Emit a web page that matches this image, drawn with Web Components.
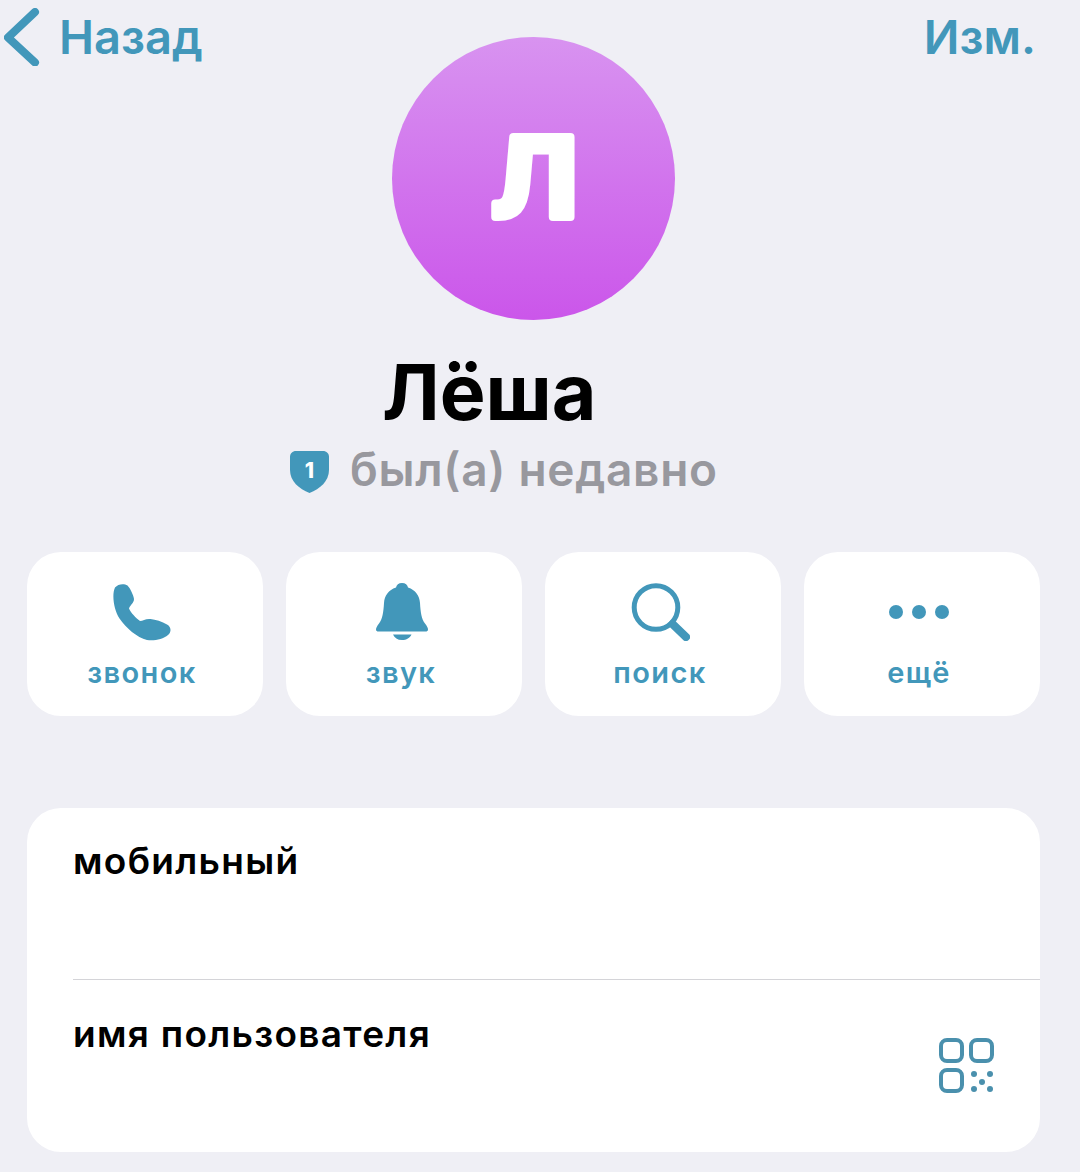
<!DOCTYPE html>
<html lang="ru">
<head>
<meta charset="utf-8">
<title>Профиль</title>
<style>
  html, body { margin: 0; background: #efeff5; }
  body { font-family: Inter, "Liberation Sans", sans-serif; }
</style>
</head>
<body>
<profile-page>
  <profile-nav slot="nav" back="Назад" edit="Изм."></profile-nav>
  <profile-avatar slot="avatar" letter="Л"></profile-avatar>
  <profile-title slot="title" name="Лёша" status="был(а) недавно" badge="1"></profile-title>
  <action-button slot="actions" label="звонок">
    <svg width="60" height="58" viewBox="0 0 60 58"><path fill="currentColor" d="M3 4.5C6 .8 12 .2 15.500 2.500C18 5 21.500 12 22 16C22 20 18.500 21.500 17 25.500C19 30 24 35 28 38C31 38 33.500 35.500 38.500 36C43.500 36.500 50 38.500 55 41.500C59.500 44 59.500 49 56 52C51 56.500 42 58 35 57C25 54.500 14 45 7.500 35.500C2 27 -.5 12 3 4.500Z"/></svg>
  </action-button>
  <action-button slot="actions" label="звук">
    <svg style="margin-left:2px" width="52" height="58" viewBox="0 0 52 58"><path fill="currentColor" d="M26 0C29.500 0 31.500 2 32 4.500C39.500 7 43.500 12.500 44 20C44.500 29 45.500 36 49 40.500C51 43 52 45 52 46.500C52 48 51 48.500 49.500 48.500H2.500C1 48.500 0 48 0 46.500C0 45 1 43 3 40.500C6.500 36 7.500 29 8 20C8.500 12.500 12.500 7 20 4.500C20.500 2 22.500 0 26 0ZM17 51.500H35.500C34 55 30.500 57 26 57C21.500 57 18.500 55 17 51.500Z"/></svg>
  </action-button>
  <action-button slot="actions" label="поиск">
    <svg width="60" height="58" viewBox="0 0 60 58"><circle cx="26" cy="24.500" r="21.800" fill="none" stroke="currentColor" stroke-width="5"/><path d="M42.500 41L56 54" fill="none" stroke="currentColor" stroke-width="8" stroke-linecap="round"/></svg>
  </action-button>
  <action-button slot="actions" label="ещё">
    <svg width="60" height="58" viewBox="0 0 60 58"><circle cx="7" cy="29" r="7" fill="currentColor"/><circle cx="30" cy="29" r="7" fill="currentColor"/><circle cx="53" cy="29" r="7" fill="currentColor"/></svg>
  </action-button>
  <info-card slot="card">
    <info-row label="мобильный"></info-row>
    <info-row label="имя пользователя" divided>
      <svg slot="aside" width="56" height="56" viewBox="0 0 56 56">
        <g fill="none" stroke="#4a90ad" stroke-width="4">
          <rect x="2" y="2" width="21" height="21" rx="6"/>
          <rect x="32" y="2" width="21" height="21" rx="6"/>
          <rect x="2" y="32" width="21" height="21" rx="6"/>
        </g>
        <g fill="#4a90ad">
          <circle cx="35" cy="36" r="3"/><circle cx="51" cy="36" r="3"/><circle cx="43" cy="44" r="3"/><circle cx="35" cy="51" r="3"/><circle cx="51" cy="51" r="3"/>
        </g>
      </svg>
    </info-row>
  </info-card>
</profile-page>

<script>
const ACCENT = '#4297ba';

/** Page frame: header stack, title, action row and info card. */
class ProfilePage extends HTMLElement {
  constructor() {
    super();
    this.attachShadow({ mode: 'open' });
    this.shadowRoot.innerHTML = `
      <style>
        :host { display: block; width: 1080px; height: 1172px; overflow: hidden; background: #efeff5; }
        .head { display: grid; }
        .head ::slotted(*) { grid-area: 1 / 1; }
        .actions { display: grid; grid-template-columns: repeat(4, 236px); gap: 23px; margin: 58px 0 0 27px; }
        .card { margin: 92px 40px 0 27px; }
      </style>
      <div class="head"><slot name="avatar"></slot><slot name="nav"></slot></div>
      <slot name="title"></slot>
      <div class="actions"><slot name="actions"></slot></div>
      <div class="card"><slot name="card"></slot></div>
    `;
  }
}

/** Top bar with the back chevron and the edit link, over the avatar. */
class ProfileNav extends HTMLElement {
  constructor() {
    super();
    this.attachShadow({ mode: 'open' });
    this.shadowRoot.innerHTML = `
      <style>
        :host { display: flex; justify-content: space-between; align-items: flex-start; padding: 8px 44px 0 4px; color: ${ACCENT}; font: 600 47px/58px Inter, "Liberation Sans", sans-serif; }
        .back { display: flex; gap: 17px; align-items: center; }
        svg { display: block; }
      </style>
      <div class="back">
        <svg width="38" height="58" viewBox="0 0 38 58"><path d="M31 4L4 29.500L31 54.500" fill="none" stroke="currentColor" stroke-width="8" stroke-linecap="round" stroke-linejoin="round"/></svg>
        <span>${this.getAttribute('back')}</span>
      </div>
      <span>${this.getAttribute('edit')}</span>
    `;
  }
}

/** Round gradient avatar with one initial, stroked so its corners come out round. */
class ProfileAvatar extends HTMLElement {
  constructor() {
    super();
    this.attachShadow({ mode: 'open' });
    this.shadowRoot.innerHTML = `
      <style>
        :host { display: block; padding: 37px 0 0 392px; }
        div { width: 283px; height: 283px; border-radius: 50%; background: linear-gradient(180deg, #d893f0, #cb56ea); }
        svg { display: block; }
        text { font: 700 110px Inter, "Liberation Sans", sans-serif; fill: #fff; stroke: #fff; stroke-width: 8px; stroke-linejoin: round; }
      </style>
      <div><svg width="283" height="283" viewBox="0 0 283 283"><text transform="translate(142.500 180) scale(1.05 1)" text-anchor="middle">${this.getAttribute('letter')}</text></svg></div>
    `;
  }
}

/** Name and last seen status, with the shield badge. */
class ProfileTitle extends HTMLElement {
  constructor() {
    super();
    this.attachShadow({ mode: 'open' });
    this.shadowRoot.innerHTML = `
      <style>
        :host { display: block; font-family: Inter, "Liberation Sans", sans-serif; }
        h1 { margin: 32px 0 0 382px; font-size: 77px; line-height: 80px; font-weight: 700; color: #000; }
        .status { display: flex; align-items: center; gap: 21px; margin: 12px 0 0 290px; height: 50px; color: #98989e; font-size: 46px; font-weight: 600; line-height: 50px; letter-spacing: .7px; }
        .badge { display: grid; width: 39px; height: 42px; place-items: center; margin-top: 6px; letter-spacing: 0; }
        .badge > * { grid-area: 1 / 1; }
        .badge span { color: #fff; font-size: 21px; font-weight: 800; line-height: 1; margin-top: -4px; }
      </style>
      <h1>${this.getAttribute('name')}</h1>
      <div class="status">
        <div class="badge">
          <svg width="39" height="42" viewBox="0 0 39 42"><path fill="${ACCENT}" d="M6 0H33C36.500 0 39 2.500 39 6V19C39 30 30 38 19.500 42C9 38 0 30 0 19V6C0 2.500 2.500 0 6 0Z"/></svg>
          <span>${this.getAttribute('badge')}</span>
        </div>
        <span>${this.getAttribute('status')}</span>
      </div>
    `;
  }
}

/** White tile with an icon (slotted svg) and a caption. */
class ActionButton extends HTMLElement {
  constructor() {
    super();
    this.attachShadow({ mode: 'open' });
    this.shadowRoot.innerHTML = `
      <style>
        :host { display: flex; flex-direction: column; align-items: center; height: 164px; padding: 31px 6px 0 0; box-sizing: border-box;
          background: #fff; border-radius: 34px; color: ${ACCENT}; font: 600 29px/36px Inter, "Liberation Sans", sans-serif; letter-spacing: 1.4px; }
        ::slotted(svg) { display: block; }
        span { margin-top: 14px; }
      </style>
      <slot></slot>
      <span>${this.getAttribute('label')}</span>
    `;
  }
}

/** White rounded card holding the info rows. */
class InfoCard extends HTMLElement {
  constructor() {
    super();
    this.attachShadow({ mode: 'open' });
    this.shadowRoot.innerHTML = `
      <style>
        :host { display: block; background: #fff; border-radius: 34px; overflow: hidden; }
      </style>
      <slot></slot>
    `;
  }
}

/** Row with a label and an optional aside; `divided` adds the top hairline. */
class InfoRow extends HTMLElement {
  constructor() {
    super();
    this.attachShadow({ mode: 'open' });
    this.shadowRoot.innerHTML = `
      <style>
        :host { display: block; margin-left: 46px; height: 171px; font: 600 37px/44px Inter, "Liberation Sans", sans-serif; color: #000; letter-spacing: 1.3px; }
        :host([divided]) { height: 172px; border-top: 1px solid #d4d4d8; }
        .row { display: flex; justify-content: space-between; padding: 31px 45px 0 0; }
        :host([divided]) .row { padding-top: 32px; }
        ::slotted(svg) { display: block; margin-top: 26px; }
      </style>
      <div class="row"><span>${this.getAttribute('label')}</span><slot name="aside"></slot></div>
    `;
  }
}

customElements.define('profile-page', ProfilePage);
customElements.define('profile-nav', ProfileNav);
customElements.define('profile-avatar', ProfileAvatar);
customElements.define('profile-title', ProfileTitle);
customElements.define('action-button', ActionButton);
customElements.define('info-card', InfoCard);
customElements.define('info-row', InfoRow);
</script>
</body>
</html>
